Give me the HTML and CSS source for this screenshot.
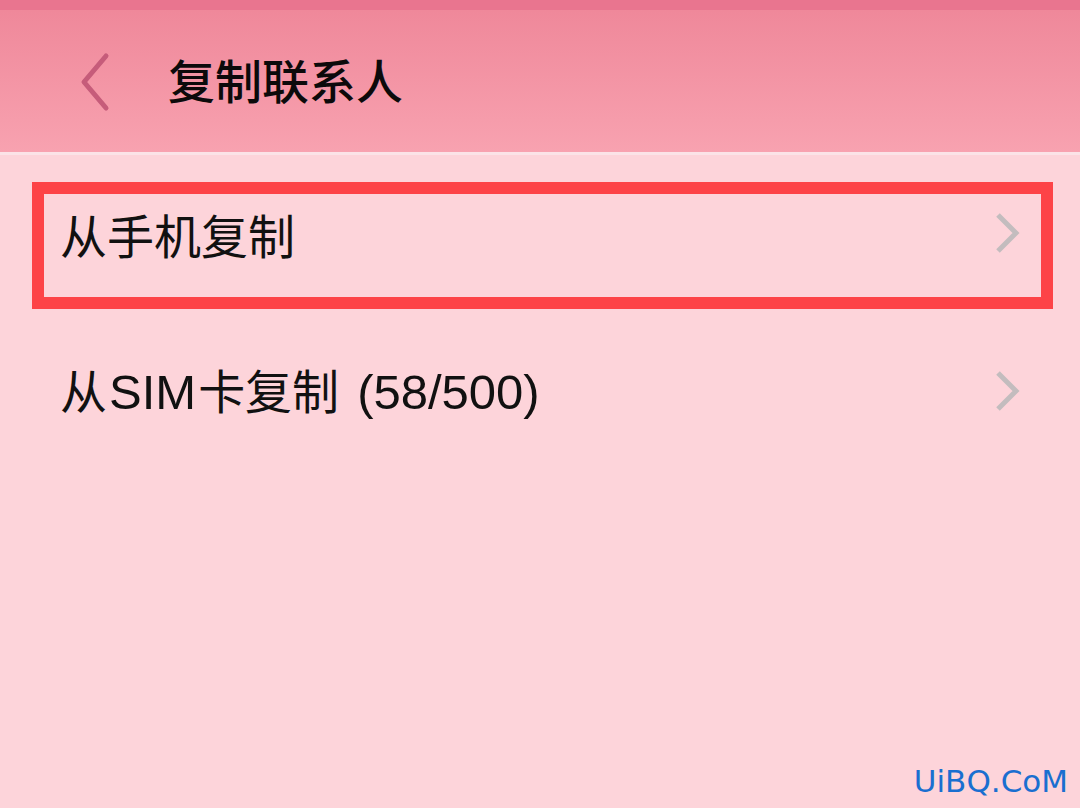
FILE: index.html
```html
<!DOCTYPE html>
<html lang="zh-CN">
<head>
  <meta charset="UTF-8">
  <meta name="viewport" content="width=device-width, initial-scale=1.0">
  <title>复制联系人</title>
  <link rel="stylesheet" href="styles.css">
</head>
<body>
  <div class="status-strip"></div>
  <header class="topbar">
    <span class="back">
      <svg width="40" height="64" viewBox="0 0 40 64">
        <path d="M30 6 L8 32 L30 58" fill="none" stroke="#c65c7a" stroke-width="5" stroke-linecap="round" stroke-linejoin="round"/>
      </svg>
    </span>
    <h1 class="title">复制联系人</h1>
  </header>
  <div class="divider"></div>

  <ul class="list">
    <li class="row">
      <span class="label">从手机复制</span>
      <svg class="arrow" width="28" height="42" viewBox="0 0 28 42">
        <path d="M4 3 L22 21 L4 39" fill="none" stroke="#c3bcbe" stroke-width="5"/>
      </svg>
      <div class="highlight"></div>
    </li>
    <li class="row">
      <span class="label">从<span class="lat">SIM</span>卡复制<span class="lat count">(58/500)</span></span>
      <svg class="arrow" width="28" height="42" viewBox="0 0 28 42">
        <path d="M4 3 L22 21 L4 39" fill="none" stroke="#c3bcbe" stroke-width="5"/>
      </svg>
    </li>
  </ul>

  <div class="watermark">UiBQ.CoM</div>
</body>
</html>
```

FILE: styles.css
```css
html, body {
  margin: 0;
  padding: 0;
  height: 100%;
  background: #fdd4da;
  overflow: hidden;
  font-family: "Noto Sans CJK SC", "Noto Sans", sans-serif;
  color: #111;
}
.status-strip {
  height: 10px;
  background: #e9758f;
}
.topbar {
  height: 142px;
  display: flex;
  align-items: center;
  background: linear-gradient(to bottom, #ef889a 0%, #f8a2b0 100%);
  box-sizing: border-box;
  padding-left: 76px;
}
.back {
  display: flex;
  width: 92px;
  margin-top: 2px;
}
.title {
  margin: 0;
  font-size: 47px;
  font-weight: 500;
  color: #0c0a0b;
  line-height: 1;
  margin-top: -6px;
}
.divider {
  height: 3px;
  background: #fbe3e7;
}
.list {
  list-style: none;
  margin: 0;
  padding: 0;
}
.row {
  position: relative;
  height: 157px;
  display: flex;
  align-items: center;
  padding: 0 58px 0 60px;
  box-sizing: border-box;
}
.row:first-child {
  height: 160px;
  padding-bottom: 4px;
}
.row + .row {
  padding-bottom: 6px;
}
.label {
  flex: 1;
  font-size: 47px;
  line-height: 1;
  color: #111;
}
.lat {
  font-family: "Liberation Sans", Arial, sans-serif;
  font-size: 49px;
  margin: 0 2px;
}
.count {
  margin-left: 18px;
}
.arrow {
  display: block;
}
.highlight {
  position: absolute;
  left: 32px;
  top: 27px;
  width: 1021px;
  height: 127px;
  border: 12px solid #fd4347;
  box-sizing: border-box;
}
.watermark {
  position: absolute;
  right: 12px;
  bottom: 9px;
  font-family: "DejaVu Sans", sans-serif;
  font-size: 31px;
  color: #1a6fd0;
}
```
